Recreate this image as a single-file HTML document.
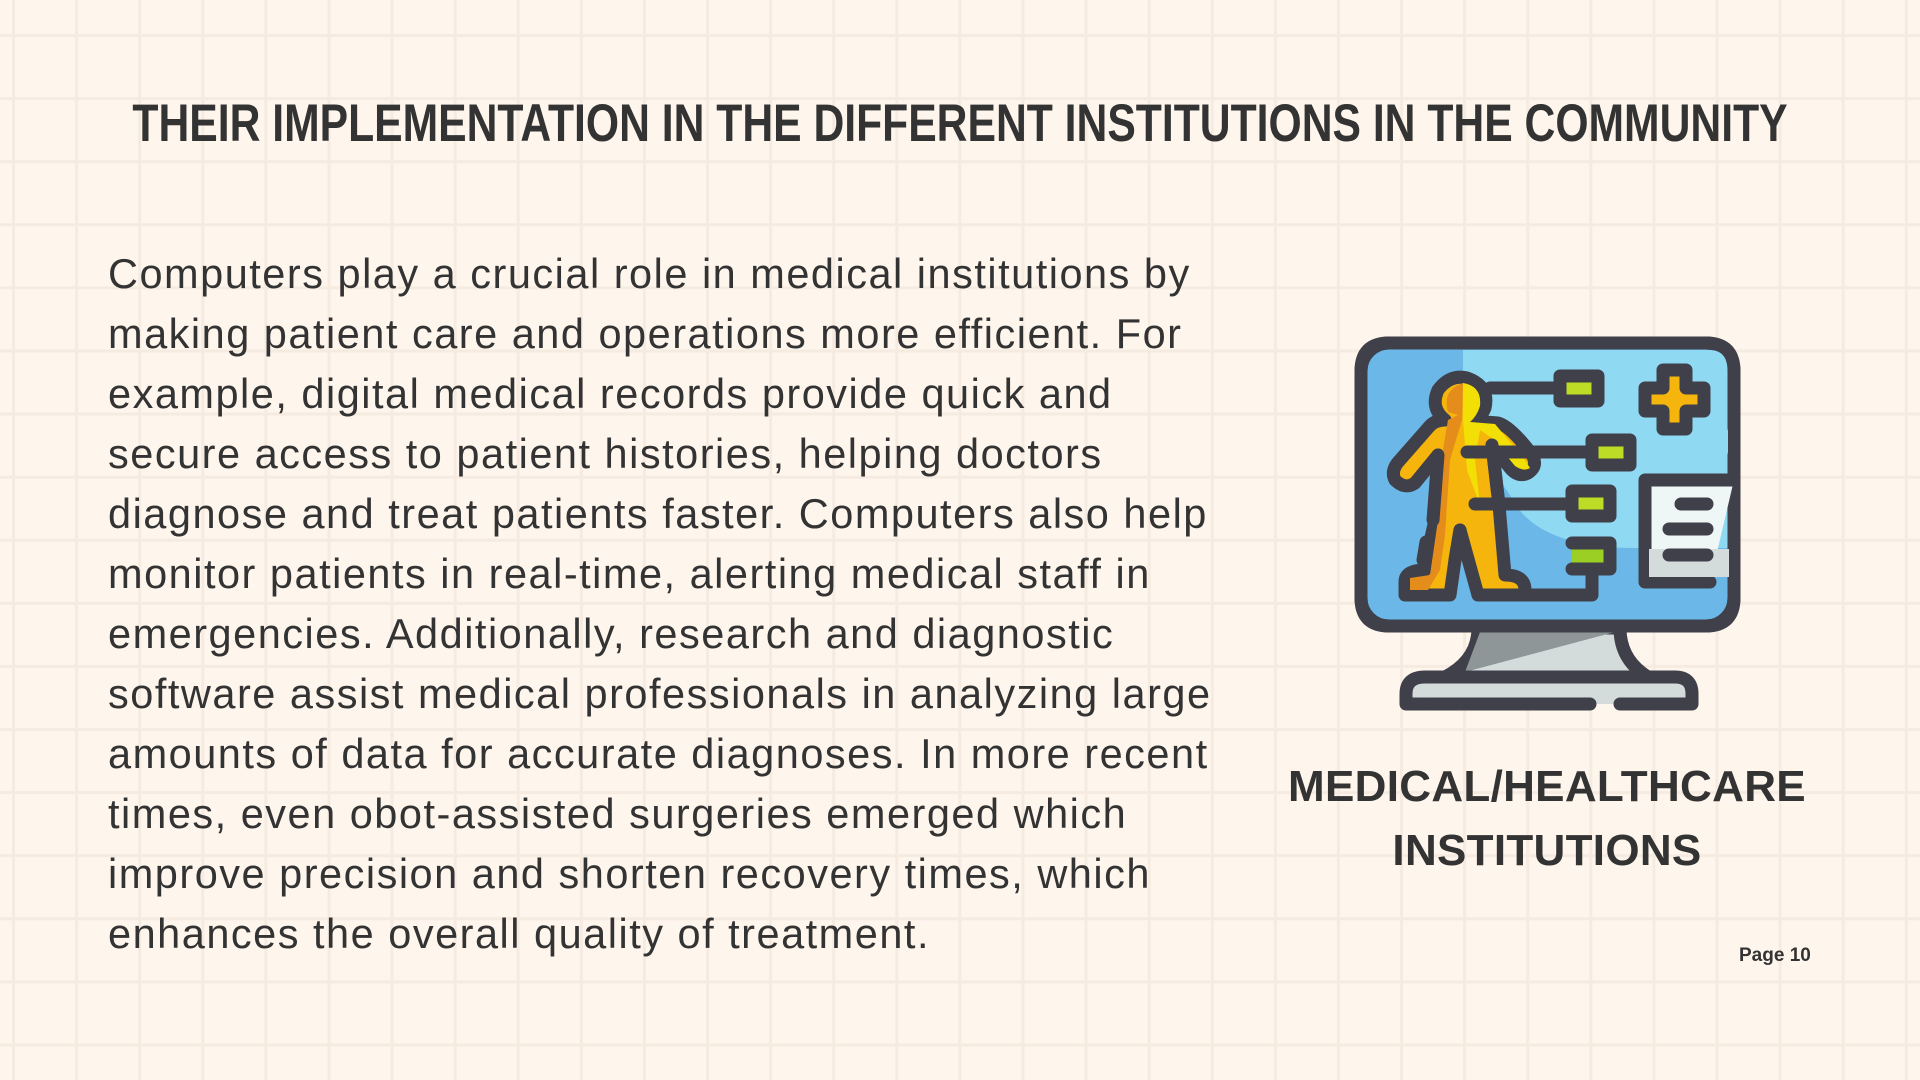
<!DOCTYPE html>
<html><head><meta charset="utf-8"><style>
html,body{margin:0;padding:0}
body{width:1920px;height:1080px;overflow:hidden;position:relative;background-color:#fef5ec;
background-image:linear-gradient(to right,#f5ebe1 3px,transparent 3px),linear-gradient(to bottom,#f5ebe1 3px,transparent 3px);
background-size:63.1px 63.1px;background-position:12px 34px;font-family:"Liberation Sans",sans-serif;color:#333}
.title{position:absolute;left:960px;top:93px;font-weight:bold;font-size:53px;color:#333;white-space:nowrap;transform:translateX(-50%) scaleX(0.805)}
.body{position:absolute;left:108px;top:244px;width:1250px;font-size:41.5px;letter-spacing:1.5px;line-height:60px;color:#333}
.body div{white-space:nowrap}
.label{position:absolute;left:1247px;width:600px;top:755px;text-align:center;font-size:44px;line-height:64px;font-weight:bold;letter-spacing:0.3px}
.page{position:absolute;left:1739px;top:945px;font-size:19px;font-weight:bold}
</style></head><body>
<div class="title">THEIR IMPLEMENTATION IN THE DIFFERENT INSTITUTIONS IN THE COMMUNITY</div>
<div class="body">
<div>Computers play a crucial role in medical institutions by</div>
<div>making patient care and operations more efficient. For</div>
<div>example, digital medical records provide quick and</div>
<div>secure access to patient histories, helping doctors</div>
<div>diagnose and treat patients faster. Computers also help</div>
<div>monitor patients in real-time, alerting medical staff in</div>
<div>emergencies. Additionally, research and diagnostic</div>
<div>software assist medical professionals in analyzing large</div>
<div>amounts of data for accurate diagnoses. In more recent</div>
<div>times, even obot-assisted surgeries emerged which</div>
<div>improve precision and shorten recovery times, which</div>
<div>enhances the overall quality of treatment.</div>
</div>
<svg style="position:absolute;left:1330px;top:320px" width="420" height="400" viewBox="0 0 420 400">
<g stroke="#3f4049" stroke-width="13" stroke-linecap="round" stroke-linejoin="round">
<path d="M148 308 Q148 340 115 357 L318 357 Q290 340 290 308 Z" fill="#d3dbdb"/>
<path d="M150 312 L285 312 L135 352 Z" fill="#8e9697" stroke="none"/>
<path d="M100 384 L76 384 L76 374 Q76 357 95 357 L345 357 Q362 357 362 374 L362 384 L290 384" fill="#d3dbdb"/>
<path d="M260 384 L100 384" fill="none"/>
<rect x="31" y="23" width="373" height="283" rx="28" fill="#6bb8e8"/>
<path d="M133 30 L380 30 Q398 30 398 48 L398 228 L305 228 Q205 228 180 175 L133 110 Z" fill="#8fd9f3" stroke="none"/>
<path d="M31 235 L31 120 M31 262 L31 278 Q31 306 59 306 L376 306 Q404 306 404 278 L404 135 M404 108 L404 51 Q404 23 376 23 L59 23 Q31 23 31 51 L31 100" fill="none"/>
<path d="M404 160 L315 160 L315 262 L380 262" fill="#eef6f6"/>
<rect x="319" y="229" width="80" height="28" fill="#d3dbdb" stroke="none"/>
<path d="M351 184 L377 184 M339 209 L377 209 M339 235 L377 235" fill="none"/>
<path d="M333 50 L356 50 L356 68 L374 68 L374 91 L356 91 L356 109 L333 109 L333 91 L315 91 L315 68 L333 68 Z" fill="#f6b50d"/>
<rect x="230" y="56" width="38" height="25" fill="#bcdc25"/>
<rect x="262" y="120" width="38" height="25" fill="#bcdc25"/>
<rect x="242" y="171" width="38" height="25" fill="#bcdc25"/>
<path d="M242 223 L280 223 L280 249 L242 249" fill="#9ccf24"/>
<path d="M160 68 L230 68 M137 132 L262 132 M145 184 L242 184 M262 249 L262 275 L148 275" fill="none"/>
<path d="M115 100 Q100 88 108 70 Q120 54 137 58 Q160 66 155 88 Q150 100 142 101 L168 103 Q180 106 200 132 Q210 145 198 153 Q188 158 180 148 L162 125 L169 185 L175 255 Q195 255 195 270 L195 275 L148 275 L130 210 L125 240 L120 275 L75 275 L75 262 Q75 250 95 250 L100 222 L105 200 L108 135 L85 163 Q75 170 65 160 Q60 150 70 140 L98 108 Q104 100 115 100 Z" fill="#f6b50d"/>
</g>
<path d="M133 63 Q112 70 118 92 L128 95 L118 100 L112 135 L108 200 L100 255 L80 258 L80 270 L98 270 L110 250 L115 215 L120 140 L132 100 Z" fill="#e48d1b"/>
<path d="M133 63 Q152 66 150 86 Q147 96 140 102 L165 104 L195 140 L200 148 Q194 152 185 146 L162 118 L150 110 L145 140 L150 185 L137 150 L133 100 Z" fill="#f2df06"/>
<path d="M137 132 L262 132" stroke="#3f4049" stroke-width="13" stroke-linecap="round"/>
<path d="M145 184 L242 184" stroke="#3f4049" stroke-width="13" stroke-linecap="round"/>
<path d="M108 135 L103 200 M96 222 L93 240 M130 210 L125 240 M162 125 L169 185" stroke="#3f4049" stroke-width="13" stroke-linecap="round" fill="none"/>
</svg>
<div class="label">MEDICAL/HEALTHCARE<br>INSTITUTIONS</div>
<div class="page">Page 10</div>
</body></html>
